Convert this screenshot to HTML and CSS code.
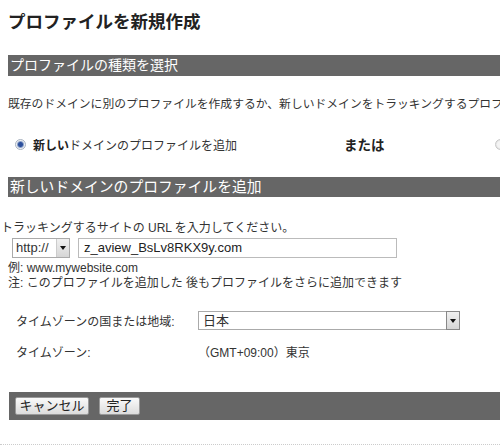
FILE: index.html
```html
<!DOCTYPE html>
<html lang="ja">
<head>
<meta charset="utf-8">
<link rel="stylesheet" href="styles.css">
</head>
<body>
<div class="page">
  <h1 class="title">プロファイルを新規作成</h1>
  <div class="bar">プロファイルの種類を選択</div>
  <p class="intro">既存のドメインに別のプロファイルを作成するか、新しいドメインをトラッキングするプロファイルを作成するかを選択します。</p>
  <div class="choice">
    <span class="radio on"></span>
    <span class="choice-label"><b>新しい</b>ドメインのプロファイルを追加</span>
    <span class="or">または</span>
    <span class="radio off"></span>
  </div>
  <div class="bar bar2">新しいドメインのプロファイルを追加</div>
  <p class="url-label">トラッキングするサイトの URL を入力してください。</p>
  <div class="url-row">
    <div class="select proto"><span class="sel-text">http://</span><span class="drop"><span class="tri"></span></span></div>
    <div class="textbox">z_aview_BsLv8RKX9y.com</div>
  </div>
  <p class="note">例: www.mywebsite.com</p>
  <p class="note">注: このプロファイルを追加した 後もプロファイルをさらに追加できます</p>
  <div class="tz">
    <div class="tz-row">
      <span class="tz-label">タイムゾーンの国または地域:</span>
      <div class="select country"><span class="sel-text">日本</span><span class="drop dark"><span class="tri"></span></span></div>
    </div>
    <div class="tz-row row2">
      <span class="tz-label">タイムゾーン:</span>
      <span class="tz-value">（GMT+09:00）東京</span>
    </div>
  </div>
  <div class="actions">
    <button class="btn cancel">キャンセル</button>
    <button class="btn done">完了</button>
  </div>
  <div class="dotted"></div>
</div>
</body>
</html>
```
FILE: styles.css
```css
* { box-sizing: border-box; }
html, body { margin: 0; padding: 0; background: #fff; }
body {
  font-family: "Liberation Sans", "Noto Sans CJK JP", sans-serif;
  color: #333;
  font-size: 12px;
  overflow: hidden;
  width: 500px;
  height: 448px;
}
.page { width: 500px; overflow: hidden; }
.title {
  margin: 10px 0 0 8px;
  font-size: 17.5px;
  line-height: 24px;
  font-weight: bold;
  color: #222;
}
.bar {
  margin: 21px 0 0 8px;
  height: 21px;
  line-height: 21px;
  background: #666;
  color: #fff;
  font-size: 14px;
  padding-left: 2px;
  white-space: nowrap;
}
.bar2 { margin-top: 25px; height: 20px; line-height: 20px; font-size: 14.8px; }
.intro {
  margin: 20px 0 0 8px;
  line-height: 16px;
  white-space: nowrap;
  font-size: 11.8px;
}
.choice {
  margin-top: 24px;
  height: 16px;
  display: flex;
  align-items: center;
  white-space: nowrap;
}
.radio {
  width: 11px; height: 11px;
  border-radius: 50%;
  flex: none;
}
.radio.on {
  margin-left: 15px;
  border: 1px solid #a8b2c0;
  background: radial-gradient(circle, #2c4f9c 0 2px, #8aa0c8 3px, #eef0f4 4px);
}
.radio.off {
  margin-left: auto;
  margin-right: -6px;
  border: 1px solid #c8c8c8;
  background: radial-gradient(circle, #f4f4f4 0 3px, #e0e0e0 5px);
}
.choice-label { margin-left: 7px; font-size: 12px; }
.choice-label b { font-weight: bold; color: #222; }
.or { margin-left: 107px; font-weight: bold; font-size: 13.5px; color: #222; }
.url-label {
  margin: 23px 0 0 1px;
  line-height: 16px;
  font-size: 12px;
  white-space: nowrap;
}
.url-row {
  margin: 2px 0 0 12px;
  display: flex;
  height: 20px;
  gap: 8px;
}
.select {
  height: 20px;
  border: 1px solid #aaa;
  background: #fff;
  font-size: 13px;
  line-height: 18px;
  display: flex;
}
.proto { width: 58px; }
.sel-text { padding-left: 3px; flex: 1; }
.drop {
  width: 13px;
  height: 18px;
  border-left: 1px solid #ccc;
  background: linear-gradient(#f0f0f0, #d6d6d6);
  display: flex;
  align-items: center;
  justify-content: center;
}
.drop.dark { border: 1px solid #888; height: 20px; margin: -1px -1px -1px 0; width: 14px; }
.tri {
  width: 0; height: 0;
  border-left: 3px solid transparent;
  border-right: 3px solid transparent;
  border-top: 4px solid #111;
}
.textbox {
  width: 319px;
  height: 20px;
  border: 1px solid #bbb;
  font-size: 13px;
  line-height: 18px;
  padding-left: 5px;
  color: #222;
}
.note {
  margin: 0 0 0 8px;
  line-height: 15px;
  white-space: nowrap;
  font-size: 12px;
}
.url-row + .note { margin-top: 3px; }
.tz { margin: 20px 0 0 16px; }
.tz-row {
  display: flex;
  align-items: center;
  height: 19px;
}
.row2 { margin-top: 13px; height: 16px; }
.tz-label { width: 182px; font-size: 12px; }
.country { width: 262px; height: 19px; line-height: 17px; font-size: 13px; }
.country .sel-text { padding-left: 4px; }
.country .drop { height: 19px; }
.tz-value { font-size: 12px; }
.actions {
  margin: 33px 0 0 9px;
  height: 28px;
  background: #666;
  padding: 5px 6px;
  display: flex;
  gap: 10px;
}
.btn {
  height: 18px;
  font-family: "Liberation Sans", "Noto Sans CJK JP", sans-serif;
  font-size: 13px;
  line-height: 16px;
  padding: 0;
  white-space: nowrap;
  text-align: center;
  border: 1px solid #999;
  border-radius: 2px;
  background: linear-gradient(#fafafa, #dcdcdc);
  color: #222;
}
.cancel { width: 74px; }
.done { width: 41px; }
.dotted {
  margin-top: 24px;
  border-top: 1px dotted #ccc;
}
```
